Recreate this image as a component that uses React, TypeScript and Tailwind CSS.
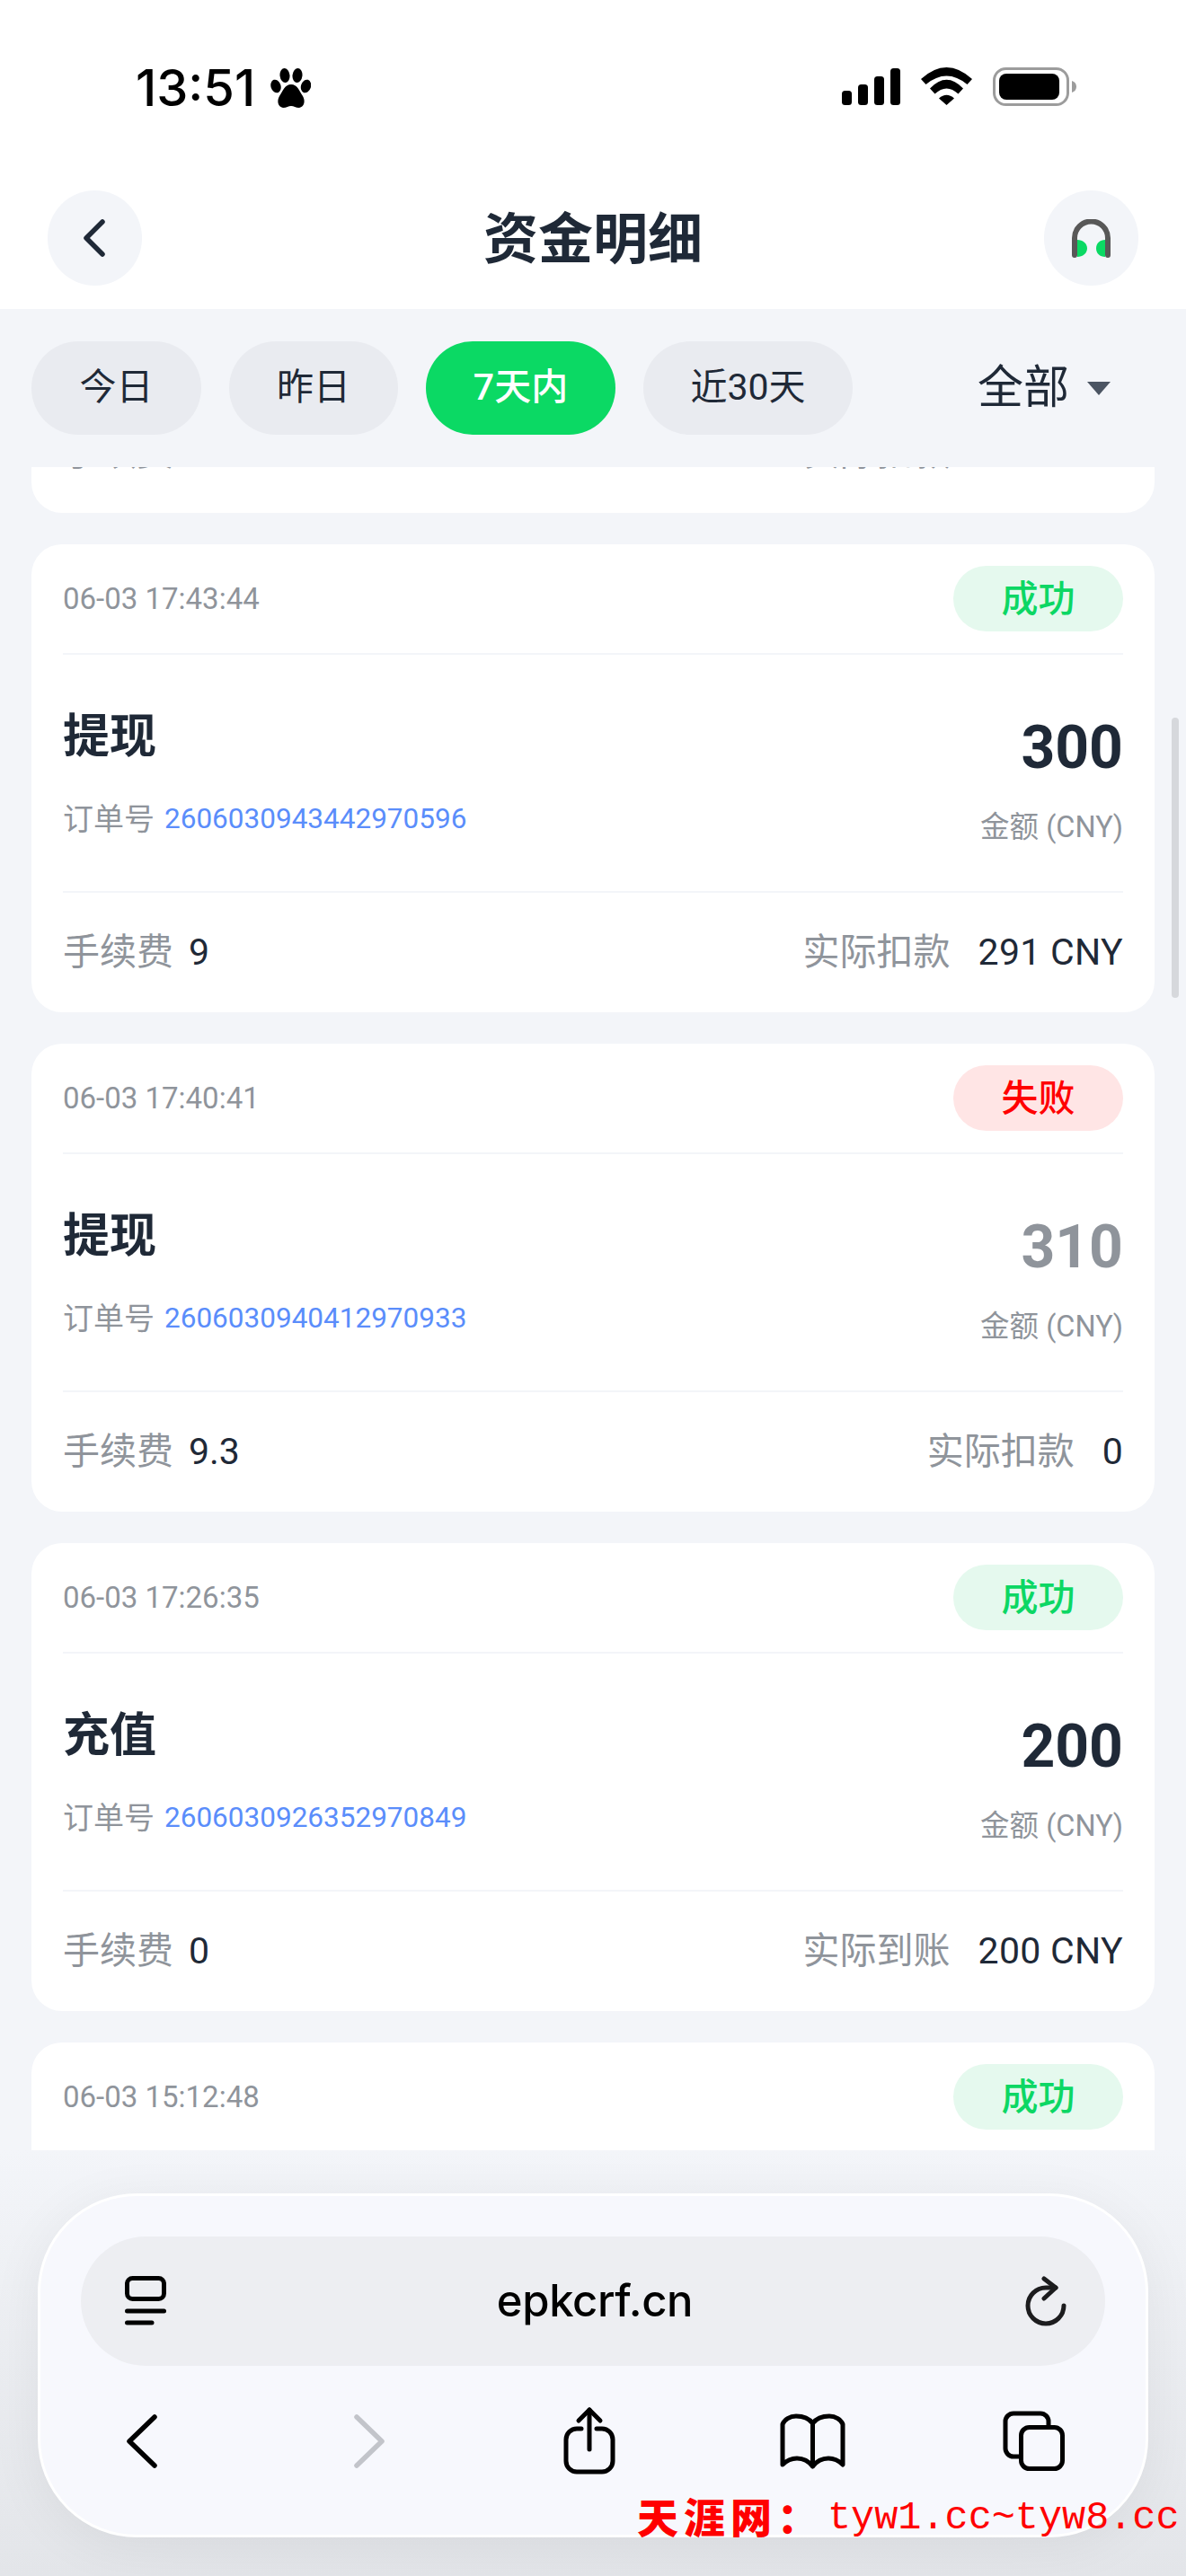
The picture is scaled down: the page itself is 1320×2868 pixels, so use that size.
import React from "react";

interface Record {
  time: string;
  status: "success" | "failed";
  title: string;
  orderNo: string;
  amount: string;
  fee: string;
  label: string;
  actual: string;
}

const records: Record[] = [
  { time: "06-03 17:43:44", status: "success", title: "提现", orderNo: "2606030943442970596", amount: "300", fee: "9", label: "实际扣款", actual: "291 CNY" },
  { time: "06-03 17:40:41", status: "failed", title: "提现", orderNo: "2606030940412970933", amount: "310", fee: "9.3", label: "实际扣款", actual: "0" },
  { time: "06-03 17:26:35", status: "success", title: "充值", orderNo: "2606030926352970849", amount: "200", fee: "0", label: "实际到账", actual: "200 CNY" },
];

const tabs = ["今日", "昨日", "7天内", "近30天"];
const tabWidths = ["w-[189px]", "w-[188px]", "w-[211px]", "w-[233px]"];

function StatusBar() {
  return (
    <div className="flex h-[212px] items-start justify-between pl-[151px] pr-[122px] pt-[76px]">
      <div className="flex items-center gap-[17px]">
        <span className="font-['Inter'] text-[56px] font-medium leading-[44px] text-black">13:51</span>
        <svg width="45" height="44" viewBox="0 0 45 44" fill="#000">
          <ellipse cx="6" cy="20" rx="5.5" ry="7.5" transform="rotate(-18 6 20)" />
          <ellipse cx="16" cy="8" rx="5.5" ry="8" transform="rotate(-6 16 8)" />
          <ellipse cx="30" cy="8" rx="5.5" ry="8" transform="rotate(6 30 8)" />
          <ellipse cx="39.5" cy="20" rx="5.5" ry="7.5" transform="rotate(18 39.5 20)" />
          <path d="M23 18C16 18 14 25 10 31C7 36 8 43 14 44C18 44 20 42 23 42C26 42 28 44 32 44C38 43 39 36 36 31C32 25 30 18 23 18Z" />
        </svg>
      </div>
      <div className="flex items-start">
        <svg width="65" height="42" viewBox="0 0 65 42" fill="#000">
          <rect x="0" y="25" width="11" height="16" rx="3.5" />
          <rect x="18" y="18" width="11" height="23" rx="3.5" />
          <rect x="36" y="9" width="11" height="32" rx="3.5" />
          <rect x="54" y="0" width="11" height="41" rx="3.5" />
        </svg>
        <svg className="ml-[23px] -mt-px" width="57" height="42" viewBox="0 0 57 42" fill="#000">
          <path d="M0 13Q28.5 -13 57 13L51.5 19Q28.5 0 5.5 19Z" />
          <path d="M10 23.5Q28.5 4 47 23.5L41.5 29.5Q28.5 17.5 15.5 29.5Z" />
          <path d="M20 34.5Q28.5 27 37 34.5L28.5 42Z" />
        </svg>
        <svg className="ml-[23px] -mt-px" width="93" height="44" viewBox="0 0 93 44">
          <rect x="1.5" y="1.5" width="82" height="40" rx="13" fill="none" stroke="#9c9c9c" strokeWidth="3" />
          <rect x="7" y="7" width="67" height="29" rx="8" fill="#000" />
          <path d="M88 15C91 16 93 18 93 21.500C93 25 91 27 88 28Z" fill="#9c9c9c" />
        </svg>
      </div>
    </div>
  );
}

function NavBar() {
  return (
    <div className="flex h-[132px] items-start justify-between px-[53px]">
      <button className="flex h-[106px] w-[105px] items-center justify-center rounded-full bg-[#f3f5f9]">
        <svg width="28" height="44" viewBox="0 0 28 44" fill="none" stroke="#1f2937" strokeWidth="5.500" strokeLinecap="round" strokeLinejoin="round">
          <path d="M22 4L4 22L22 40" />
        </svg>
      </button>
      <h1 className="pt-[22px] text-[61px] font-semibold leading-[66px] text-[#1f2937]">资金明细</h1>
      <button className="flex h-[106px] w-[105px] items-center justify-center rounded-full bg-[#f3f5f9]">
        <svg width="43" height="43" viewBox="0 0 43 43">
          <path d="M6 23C12 23 17 27 17 32.500C17 38 12 42 6 42Z" fill="#0bd964" />
          <path d="M37 23C31 23 27 27 27 32.500C27 38 31 42 37 42Z" fill="#0bd964" />
          <path d="M3 40V21A18.500 18.500 0 0 1 40 21V40" fill="none" stroke="#585858" strokeWidth="6" strokeLinecap="round" />
        </svg>
      </button>
    </div>
  );
}

function Filters() {
  return (
    <div className="flex h-[176px] items-center pl-[35px] pr-[84px]">
      <div className="flex gap-[31px]">
        {tabs.map((tab, i) => (
          <button
            key={tab}
            className={`h-[104px] rounded-full text-[41px] ${tabWidths[i]} ${
              i === 2 ? "bg-[#0bd964] font-medium text-white" : "bg-[#e9ebf0] text-[#1f2937]"
            }`}
          >
            {tab}
          </button>
        ))}
      </div>
      <div className="ml-auto flex items-center gap-[20px]">
        <span className="text-[51px] leading-[60px] text-[#1f2937]">全部</span>
        <span className="h-0 w-0 border-x-[13px] border-t-[15px] border-x-transparent border-t-[#4b5563]" />
      </div>
    </div>
  );
}

function Badge({ status }: { status: Record["status"] }) {
  return status === "success" ? (
    <span className="flex h-[73px] w-[189px] items-center justify-center rounded-full bg-[#e5f9ee] pt-[2px] text-[41px] font-medium text-[#0cd764]">成功</span>
  ) : (
    <span className="flex h-[73px] w-[189px] items-center justify-center rounded-full bg-[#ffe5e5] pt-[2px] text-[41px] font-medium text-[#ff0000]">失败</span>
  );
}

function RecordCard({ record }: { record: Record }) {
  const failed = record.status === "failed";
  return (
    <div className="h-[521px] shrink-0 rounded-[34px] bg-white px-[35px]">
      <div className="flex h-[123px] items-center justify-between border-b-2 border-[#f3f5f9]">
        <span className="text-[33px] leading-[44px] text-[#8f949b]">{record.time}</span>
        <Badge status={record.status} />
      </div>
      <div className="flex h-[265px] justify-between border-b-2 border-[#f3f5f9] pt-[62px]">
        <div>
          <div className="text-[52px] font-semibold leading-[60px] text-[#1f2937]">{record.title}</div>
          <div className="mt-[39px] flex items-center gap-[11px] text-[34px] leading-[44px]">
            <span className="text-[#8f949b]">订单号</span>
            <span className="text-[31.5px] text-[#5a8dfb]">{record.orderNo}</span>
          </div>
        </div>
        <div className="mt-[6px] flex flex-col items-end">
          <div className={`text-[66px] font-bold leading-[72px] ${failed ? "text-[#8f949b]" : "text-[#1f2937]"}`}>{record.amount}</div>
          <div className="mt-[30px] text-[32.5px] leading-[44px] text-[#8f949b]">金额 (CNY)</div>
        </div>
      </div>
      <div className="flex h-[131px] items-center justify-between pt-[3px] text-[41px]">
        <div className="flex items-center gap-[17px]">
          <span className="text-[#8f949b]">手续费</span>
          <span className="text-[#1f2937]">{record.fee}</span>
        </div>
        <div className="flex items-center gap-[31px]">
          <span className="text-[#8f949b]">{record.label}</span>
          <span className="tracking-[0.3px] text-[#1f2937]">{record.actual}</span>
        </div>
      </div>
    </div>
  );
}

function BrowserBar() {
  return (
    <div className="mx-[42px] h-[383px] rounded-[110px] border-[3px] border-white bg-[#f7f8fd] px-[45px] pt-[45px] shadow-[0_10px_60px_rgba(0,0,0,0.06)]">
      <div className="flex h-[144px] items-center justify-between rounded-[72px] bg-[#edeef2] pl-[49px] pr-[41px]">
        <svg width="46" height="56" viewBox="0 0 46 56" fill="none" stroke="#000" strokeWidth="5" strokeLinecap="round">
          <rect x="2.500" y="2.500" width="41" height="23" rx="6" />
          <path d="M2.500 39H43.500" />
          <path d="M2.500 52H30" />
        </svg>
        <span className="font-['Inter'] text-[49px] font-medium leading-[60px] tracking-[-0.4px] text-black">epkcrf.cn</span>
        <svg width="50" height="60" viewBox="0 0 50 60" fill="none" stroke="#1c1c1e" strokeWidth="5" strokeLinecap="round" strokeLinejoin="round">
          <path d="M45 35A20 20 0 1 1 25 15H36" />
          <path d="M23 5L36 15L23 27" />
        </svg>
      </div>
      <div className="mt-[45px] flex items-center pl-[50px]">
        <svg width="36" height="60" viewBox="0 0 36 60" fill="none" stroke="#000" strokeWidth="5.500" strokeLinecap="round" strokeLinejoin="round">
          <path d="M32 3L4 30L32 57" />
        </svg>
        <svg className="ml-[217px]" width="36" height="60" viewBox="0 0 36 60" fill="none" stroke="#c2c4ca" strokeWidth="5.500" strokeLinecap="round" strokeLinejoin="round">
          <path d="M4 3L32 30L4 57" />
        </svg>
        <svg className="ml-[197px]" width="60" height="78" viewBox="0 0 60 78" fill="none" stroke="#000" strokeWidth="5" strokeLinecap="round" strokeLinejoin="round">
          <path d="M21 25H16A12 12 0 0 0 4 37V61A12 12 0 0 0 16 73H44A12 12 0 0 0 56 61V37A12 12 0 0 0 44 25H38" />
          <path d="M30 48V4" />
          <path d="M18 16L30 4L42 16" />
        </svg>
        <svg className="ml-[180px]" width="77" height="65" viewBox="0 0 77 65" fill="none" stroke="#000" strokeWidth="5" strokeLinecap="round" strokeLinejoin="round">
          <path d="M38.500 12C34 6 26 4 20 4C13 4 7 8 5 13V58C10 53 15 51 21 51C28 51 34 54 38.500 60C43 54 49 51 56 51C62 51 67 53 72 58V13C70 8 64 4 57 4C51 4 43 6 38.500 12ZM38.500 12V60" />
        </svg>
        <svg className="ml-[171px]" width="74" height="72" viewBox="0 0 74 72" fill="none" stroke="#000" strokeWidth="5" strokeLinecap="round" strokeLinejoin="round">
          <path d="M53 18V14A9 9 0 0 0 44 5H14A9 9 0 0 0 5 14V44A9 9 0 0 0 14 53H22" />
          <rect x="22.500" y="20.500" width="46" height="46" rx="9" />
        </svg>
      </div>
    </div>
  );
}

export default function App() {
  return (
    <div className="relative flex h-[2868px] w-[1320px] flex-col overflow-hidden bg-[#f3f5f9] font-['Roboto','Noto_Sans_CJK_SC',sans-serif]">
      <header className="bg-white">
        <StatusBar />
        <NavBar />
      </header>
      <Filters />

      {/* 列表区域，上下都被裁切 */}
      <div className="h-[1874px] overflow-hidden px-[35px]">
        <div className="-mt-[470px] flex flex-col gap-[35px]">
          <RecordCard record={{ ...records[0], actual: "300 CNY" }} />
          {records.map((r) => (
            <RecordCard key={r.orderNo} record={r} />
          ))}
          <RecordCard record={{ ...records[2], time: "06-03 15:12:48" }} />
        </div>
      </div>

      <div className="flex-1 bg-gradient-to-b from-[#f3f5f9] to-[#e3e5e9] pt-[48px]">
        <BrowserBar />
      </div>

      {/* 滚动条 */}
      <div className="absolute left-[1304px] top-[799px] h-[312px] w-[8px] rounded-full bg-[#d6d8dc]" />

      {/* 水印 */}
      <div className="absolute left-[709px] top-[2776px] flex items-center text-[#ff0000]">
        <span className="text-[46px] font-black leading-[56px] tracking-[6px]">天涯网：</span>
        <span className="ml-[4px] font-['Liberation_Mono',monospace] text-[43.5px] leading-[56px]">tyw1.cc~tyw8.cc</span>
      </div>
    </div>
  );
}
